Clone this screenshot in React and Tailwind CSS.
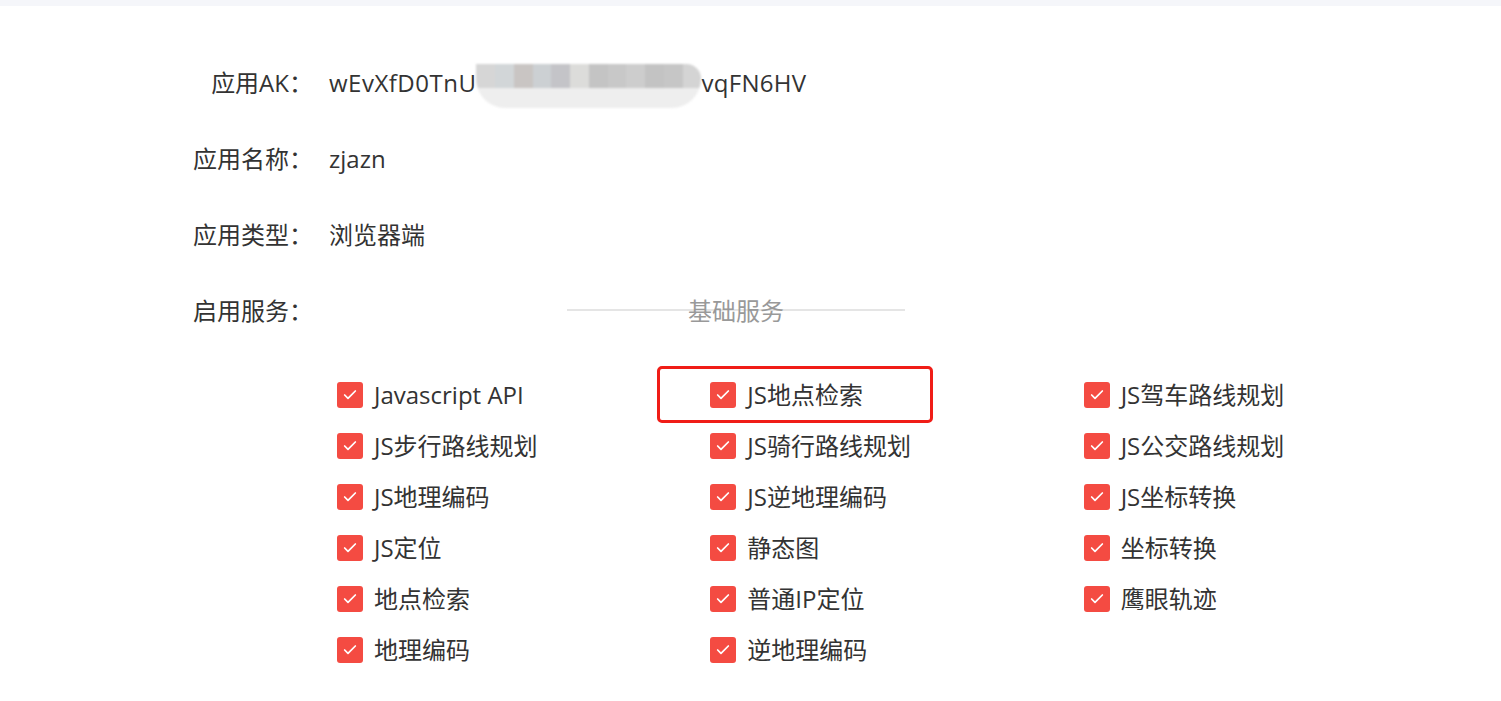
import { Check } from "lucide-react";

const services = [
  ["Javascript API", "JS地点检索", "JS驾车路线规划"],
  ["JS步行路线规划", "JS骑行路线规划", "JS公交路线规划"],
  ["JS地理编码", "JS逆地理编码", "JS坐标转换"],
  ["JS定位", "静态图", "坐标转换"],
  ["地点检索", "普通IP定位", "鹰眼轨迹"],
  ["地理编码", "逆地理编码", null],
];

const blurShades = ["#d6d6d6", "#d2d6d8", "#c9c5c3", "#ccd0d3", "#c4c4c8", "#dcdcda", "#c4c4c4", "#c8c8c8", "#cdcdcd", "#c3c3c3", "#c6c6c6", "#d4d4d4"];

function Row({ label, children }) {
  return (
    <div className="flex h-[40px] items-center">
      <div className="w-[313px] shrink-0 text-right">{label}</div>
      <div className="ml-[16px] flex items-center">{children}</div>
    </div>
  );
}

function Item({ text }) {
  return (
    <div className="flex h-[51px] items-center">
      <span className="flex h-[26px] w-[26px] items-center justify-center rounded-[3px] bg-[#f44b42]">
        <Check size={16} strokeWidth={2.6} color="#fff" />
      </span>
      <span className="ml-[11px]">{text}</span>
    </div>
  );
}

export default function App() {
  return (
    <main
      className="relative min-h-screen bg-white text-[24px] text-[#333]"
      style={{ fontFamily: '"Open Sans", "Noto Sans CJK SC", sans-serif' }}
    >
      <div className="h-[6px] bg-[#f5f6fa]" />

      <div className="flex flex-col gap-[36px] pt-[57px]">
        <Row label="应用AK：">
          <span className="tracking-[0.5px]">wEvXfD0TnU</span>
          <span className="relative inline-flex h-[44px] w-[225px] translate-y-[3px] overflow-hidden rounded-b-[60px] rounded-tr-[30px] blur-[1px]">
            {blurShades.map((c, i) => (
              <span key={i} className="flex flex-1 flex-col">
                <span className="h-[24px]" style={{ background: c }} />
                <span className="flex-1 bg-[#eeeeee]" />
              </span>
            ))}
          </span>
          <span className="tracking-[0.3px]">vqFN6HV</span>
        </Row>
        <Row label="应用名称：">zjazn</Row>
        <Row label="应用类型：">浏览器端</Row>
        <Row label="启用服务：">
          <div className="relative ml-[238px] flex w-[338px] items-center justify-center">
            <div className="absolute inset-x-0 top-1/2 h-[2px] -translate-y-[2px] bg-[#e5e5e5]" />
            <span className="relative text-[#999]">基础服务</span>
          </div>
        </Row>
      </div>

      <div className="mt-[38px] ml-[337px] grid w-[1120px] grid-cols-3">
        {services.flat().map((s, i) => (
          <div key={i}>{s && <Item text={s} />}</div>
        ))}
      </div>

      <div className="absolute left-[657px] top-[366px] h-[57px] w-[276px] rounded-[5px] border-[3px] border-[#f01d17]" />
    </main>
  );
}
